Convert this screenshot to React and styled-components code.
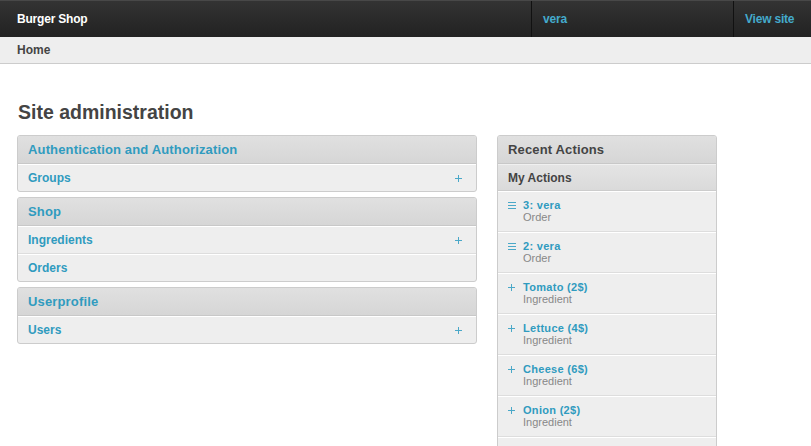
import React from 'react'
import styled, { createGlobalStyle } from "styled-components";

const GlobalStyle = createGlobalStyle`
  body {
    margin: 0;
    background: #fff;
    font-family: "Liberation Sans", Arial, sans-serif;
    font-size: 12px;
    color: #444;
  }
  a { text-decoration: none; }
`;

const groups = [
  {
    title: "Authentication and Authorization",
    rows: [{ name: "Groups", add: true }],
  },
  {
    title: "Shop",
    rows: [
      { name: "Ingredients", add: true },
      { name: "Orders", add: false },
    ],
  },
  {
    title: "Userprofile",
    rows: [{ name: "Users", add: true }],
  },
];

const actions = [
  { icon: "change", title: "3: vera", type: "Order" },
  { icon: "change", title: "2: vera", type: "Order" },
  { icon: "add", title: "Tomato (2$)", type: "Ingredient" },
  { icon: "add", title: "Lettuce (4$)", type: "Ingredient" },
  { icon: "add", title: "Cheese (6$)", type: "Ingredient" },
  { icon: "add", title: "Onion (2$)", type: "Ingredient" },
];

// thin icons drawn like the grappelli glyphs
const ChangeIcon = () => (
  <svg width="8" height="8" viewBox="0 0 8 8">
    <path d="M0 1.5h8M0 4.5h8M0 7.5h8" stroke="#4aa8c8" strokeWidth="1" />
  </svg>
);

const AddIcon = () => (
  <svg width="9" height="9" viewBox="0 0 9 9">
    <path d="M1 4.5h7M4.5 1v7" stroke="#4aa8c8" strokeWidth="1" />
  </svg>
);

const App = () => {
  return (
    <>
      <GlobalStyle />
      <Header>
        <Brand>Burger Shop</Brand>
        <HeaderTool $width="202px">vera</HeaderTool>
        <HeaderTool $width="78px">View site</HeaderTool>
      </Header>
      <Breadcrumbs>Home</Breadcrumbs>
      <Content>
        <Title>Site administration</Title>
        <Columns>
          <MainColumn>
            {groups.map((group) => (
              <Module key={group.title}>
                <ModuleHeader $link>{group.title}</ModuleHeader>
                {group.rows.map((row) => (
                  <Row key={row.name}>
                    <RowLink>{row.name}</RowLink>
                    {row.add && <AddLink><AddIcon /></AddLink>}
                  </Row>
                ))}
              </Module>
            ))}
          </MainColumn>
          <SideColumn>
            <Module>
              <ModuleHeader>Recent Actions</ModuleHeader>
              <SubHeader>My Actions</SubHeader>
              {actions.map((a, i) => (
                <ActionItem key={i}>
                  <ActionIcon>{a.icon === "add" ? <AddIcon /> : <ChangeIcon />}</ActionIcon>
                  <ActionText>
                    <ActionTitle>{a.title}</ActionTitle>
                    <ActionType>{a.type}</ActionType>
                  </ActionText>
                </ActionItem>
              ))}
              <ActionItem />
            </Module>
          </SideColumn>
        </Columns>
      </Content>
    </>
  );
}

const Header = styled.header`
  display: flex;
  align-items: stretch;
  height: 36px;
  border-top: 1px solid #484848;
  background: linear-gradient(#333, #222);
`;

const Brand = styled.div`
  flex: 1;
  display: flex;
  align-items: center;
  padding-left: 17px;
  color: #fff;
  font-weight: bold;
  font-size: 12px;
  letter-spacing: -0.2px;
`;

const HeaderTool = styled.a`
  display: flex;
  align-items: center;
  width: ${(p) => p.$width};
  box-sizing: border-box;
  padding-left: 11px;
  border-left: 1px solid #111;
  color: #44aacc;
  font-weight: bold;
  font-size: 12px;
  letter-spacing: -0.2px;
`;

const Breadcrumbs = styled.div`
  height: 26px;
  display: flex;
  align-items: center;
  padding-left: 17px;
  background: #eee;
  border-bottom: 1px solid #ccc;
  font-weight: bold;
  font-size: 12px;
  color: #444;
`;

const Content = styled.main`
  padding: 35px 17px 0;
`;

const Title = styled.h1`
  margin: 0 0 9px 1px;
  font-size: 19.5px;
  line-height: 27px;
  font-weight: bold;
  color: #444;
`;

const Columns = styled.div`
  display: flex;
  gap: 20px;
  align-items: flex-start;
`;

const MainColumn = styled.div`
  width: 460px;
  display: flex;
  flex-direction: column;
  gap: 5px;
`;

const SideColumn = styled.div`
  width: 220px;
`;

const Module = styled.div`
  border: 1px solid #ccc;
  border-radius: 3px;
  background: #eee;
  overflow: hidden;
`;

const ModuleHeader = styled.h2`
  margin: 0;
  height: 27px;
  display: flex;
  align-items: center;
  padding-left: 10px;
  background: linear-gradient(#e0e0e0, #d6d6d6);
  border-bottom: 1px solid #c8c8c8;
  font-size: 13px;
  font-weight: bold;
  letter-spacing: 0.15px;
  color: ${(p) => (p.$link ? "#309bbf" : "#444")};
`;

const SubHeader = styled.h3`
  margin: 0;
  height: 25px;
  display: flex;
  align-items: center;
  padding-left: 10px;
  border-top: 1px solid #f0f0f0;
  border-bottom: 1px solid #ccc;
  background: linear-gradient(#e4e4e4, #dadada);
  font-size: 12px;
  font-weight: bold;
  color: #444;
`;

const Row = styled.div`
  height: 26px;
  display: flex;
  align-items: center;
  justify-content: space-between;
  padding: 0 13px 0 10px;
  border-top: 1px solid #fff;
  border-bottom: 1px solid #ddd;
  &:last-child { border-bottom: none; }
`;

const RowLink = styled.a`
  color: #309bbf;
  font-weight: bold;
  font-size: 12px;
`;

const AddLink = styled.a`
  display: flex;
`;

const ActionItem = styled.div`
  display: flex;
  gap: 7px;
  padding: 7px 10px 0 9px;
  box-sizing: border-box;
  height: 41px;
  border-top: 1px solid #fff;
  border-bottom: 1px solid #ddd;
`;

const ActionIcon = styled.span`
  width: 9px;
  padding-top: 2px;
  display: flex;
  align-items: flex-start;
  justify-content: center;
`;

const ActionText = styled.div`
  display: flex;
  flex-direction: column;
`;

const ActionTitle = styled.a`
  color: #309bbf;
  font-weight: bold;
  font-size: 11px;
  line-height: 12px;
  letter-spacing: 0.3px;
`;

const ActionType = styled.span`
  color: #888;
  font-size: 11px;
  line-height: 12px;
`;

export default App
